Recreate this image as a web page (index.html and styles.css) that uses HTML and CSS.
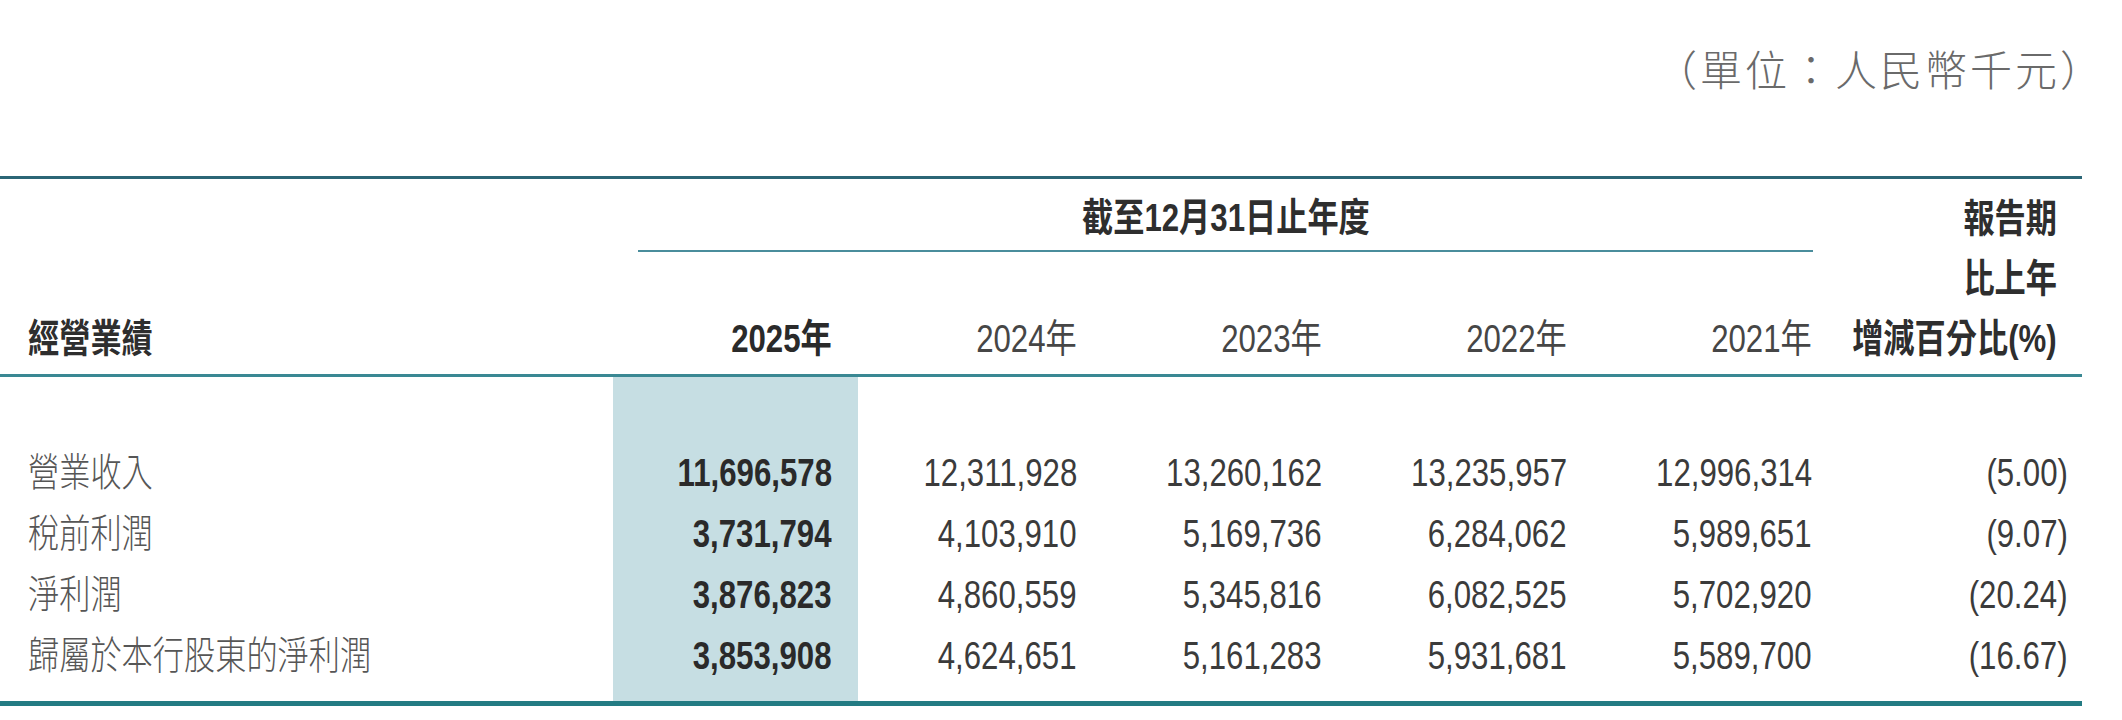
FILE: index.html
```html
<!DOCTYPE html>
<html lang="zh-Hant">
<head>
<meta charset="utf-8">
<title>經營業績</title>
<link rel="stylesheet" href="styles.css">
</head>
<body>
<div class="page">
  <div class="unit">（單位：人民幣千元）</div>
  <div class="tbl">
    <div class="head">
      <div class="hc lbl"><span class="t tl">經營業績</span></div>
      <div class="hc period"><div class="period-in"><span class="t tc">截至12月31日止年度</span></div></div>
      <div class="hc yr cur"><span class="t tr">2025年</span></div>
      <div class="hc yr"><span class="t tr">2024年</span></div>
      <div class="hc yr"><span class="t tr">2023年</span></div>
      <div class="hc yr"><span class="t tr">2022年</span></div>
      <div class="hc yr"><span class="t tr">2021年</span></div>
      <div class="hc chg">
        <div class="ln"><span class="t tr">報告期</span></div>
        <div class="ln"><span class="t tr">比上年</span></div>
        <div class="ln"><span class="t tr">增減百分比(%)</span></div>
      </div>
    </div>
    <div class="body">
      <div class="c lbl"><span class="t tl">營業收入</span></div>
      <div class="c num cur"><span class="t tr">11,696,578</span></div>
      <div class="c num"><span class="t tr">12,311,928</span></div>
      <div class="c num"><span class="t tr">13,260,162</span></div>
      <div class="c num"><span class="t tr">13,235,957</span></div>
      <div class="c num"><span class="t tr">12,996,314</span></div>
      <div class="c pct"><span class="t tr">(5.00)</span></div>

      <div class="c lbl"><span class="t tl">稅前利潤</span></div>
      <div class="c num cur"><span class="t tr">3,731,794</span></div>
      <div class="c num"><span class="t tr">4,103,910</span></div>
      <div class="c num"><span class="t tr">5,169,736</span></div>
      <div class="c num"><span class="t tr">6,284,062</span></div>
      <div class="c num"><span class="t tr">5,989,651</span></div>
      <div class="c pct"><span class="t tr">(9.07)</span></div>

      <div class="c lbl"><span class="t tl">淨利潤</span></div>
      <div class="c num cur"><span class="t tr">3,876,823</span></div>
      <div class="c num"><span class="t tr">4,860,559</span></div>
      <div class="c num"><span class="t tr">5,345,816</span></div>
      <div class="c num"><span class="t tr">6,082,525</span></div>
      <div class="c num"><span class="t tr">5,702,920</span></div>
      <div class="c pct"><span class="t tr">(20.24)</span></div>

      <div class="c lbl"><span class="t tl">歸屬於本行股東的淨利潤</span></div>
      <div class="c num cur"><span class="t tr">3,853,908</span></div>
      <div class="c num"><span class="t tr">4,624,651</span></div>
      <div class="c num"><span class="t tr">5,161,283</span></div>
      <div class="c num"><span class="t tr">5,931,681</span></div>
      <div class="c num"><span class="t tr">5,589,700</span></div>
      <div class="c pct"><span class="t tr">(16.67)</span></div>
    </div>
  </div>
</div>
</body>
</html>
```

FILE: styles.css
```css
html, body {
  margin: 0;
  padding: 0;
  background: #ffffff;
}

.page {
  width: 2122px;
  font-family: "Liberation Sans", "Noto Sans CJK TC", sans-serif;
  font-size: 39px;
  color: #3a3a3a;
}

.unit {
  padding-top: 40px;
  padding-right: 17px;
  height: 56px;
  line-height: 56px;
  text-align: right;
  font-family: "Noto Sans CJK TC", sans-serif;
  font-size: 42px;
  font-weight: 300;
  letter-spacing: 3px;
  color: #6a6a6a;
}

.tbl {
  margin-top: 80px;
  width: 2082px;
}

.t {
  display: inline-block;
  transform: scaleX(0.8);
  white-space: nowrap;
}
.tl { transform-origin: left center; }
.tr { transform-origin: right center; }
.tc { transform-origin: center center; }

.head {
  display: grid;
  grid-template-columns: 613px repeat(5, 245px) 244px;
  grid-template-rows: 73px 117px;
  border-top: 3px solid #2b6676;
  border-bottom: 3px solid #3a8893;
  padding-bottom: 5px;
  line-height: 60px;
  font-weight: 700;
  color: #2e2e2e;
}

.hc { min-width: 0; }

.head .lbl {
  grid-column: 1;
  grid-row: 1 / 3;
  align-self: end;
  padding-left: 28px;
}

.period {
  grid-column: 2 / 7;
  grid-row: 1;
  padding: 9px 25px 0;
}

.period-in {
  text-align: center;
  padding-bottom: 2px;
  border-bottom: 2px solid #4a8d9c;
}

.yr {
  grid-row: 2;
  align-self: end;
  text-align: right;
  padding-right: 26px;
  font-weight: 400;
  color: #464646;
}
.yr.cur {
  font-weight: 700;
  color: #2a2a2a;
}

.chg {
  grid-column: 7;
  grid-row: 1 / 3;
  align-self: end;
  padding-right: 25px;
}

.ln {
  display: flex;
  justify-content: flex-end;
}

.body {
  display: grid;
  grid-template-columns: 613px repeat(5, 245px) 244px;
  grid-auto-rows: 61px;
  align-items: baseline;
  padding-top: 66px;
  padding-bottom: 14px;
  border-bottom: 5px solid #237b83;
  line-height: 60px;
  background: linear-gradient(to right,
    transparent 613px, #c6dee3 613px, #c6dee3 858px, transparent 858px);
}

.body .lbl {
  padding-left: 28px;
  font-weight: 300;
  color: #565656;
}

.num {
  text-align: right;
  padding-right: 26px;
  color: #3b3b3b;
}
.num.cur {
  font-weight: 700;
  color: #2a2a2a;
}

.pct {
  text-align: right;
  padding-right: 14px;
  color: #3b3b3b;
}
```
